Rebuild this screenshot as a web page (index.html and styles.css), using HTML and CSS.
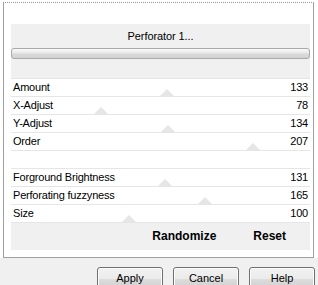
FILE: index.html
```html
<!DOCTYPE html>
<html lang="en">
<head>
  <meta charset="UTF-8">
  <title>Perforator 1...</title>
  <link rel="stylesheet" href="styles.css">
</head>
<body>
  <div class="dialog">
    <div class="frame">
      <div class="panel">
        <div class="title">Perforator 1...</div>
        <div class="progress"></div>
        <div class="sliders">
          <div class="row"><span>Amount</span><span>133</span><i class="thumb" style="left:156px"></i></div>
          <div class="row"><span>X-Adjust</span><span>78</span><i class="thumb" style="left:90px"></i></div>
          <div class="row"><span>Y-Adjust</span><span>134</span><i class="thumb" style="left:157px"></i></div>
          <div class="row"><span>Order</span><span>207</span><i class="thumb" style="left:242px"></i></div>
          <div class="row"></div>
          <div class="row"><span>Forground Brightness</span><span>131</span><i class="thumb" style="left:154px"></i></div>
          <div class="row"><span>Perforating fuzzyness</span><span>165</span><i class="thumb" style="left:194px"></i></div>
          <div class="row"><span>Size</span><span>100</span><i class="thumb" style="left:118px"></i></div>
        </div>
        <div class="actions">
          <span>Randomize</span>
          <span>Reset</span>
        </div>
      </div>
    </div>
    <div class="footer">
      <button>Apply</button>
      <button>Cancel</button>
      <button>Help</button>
    </div>
  </div>
</body>
</html>
```

FILE: styles.css
```css
*{
  margin: 0;
  padding: 0;
  box-sizing: border-box;
}
html, body{
  width: 318px;
  height: 285px;
  overflow: hidden;
}
body{
  background: #fff;
  color: #000;
  font-family: "Liberation Sans", Arial, sans-serif;
  font-size: 11px;
}
.dialog{
  height: 100%;
  display: flex;
  flex-direction: column;
}
.frame{
  margin: 2px 0 0 3px;
  width: 311px;
  background: #fff;
  border: 1px solid #a0a0a0;
  border-top: 1px dotted #9a9a9a;
  padding: 21px 3px 7px 7px;
}
.panel{
  width: 299px;
  background: #f0f0f0;
}
.title{
  height: 24px;
  line-height: 24px;
  text-align: center;
  letter-spacing: -0.1px;
}
.progress{
  height: 11px;
  border: 1px solid #a9a9a9;
  border-radius: 3px;
  background: linear-gradient(#fafafa, #e8e8e8 45%, #dadada 55%, #d2d2d2);
  margin-bottom: 19px;
}
.sliders{
  background: #fff;
  border-bottom: 1px solid #e6e6e6;
}
.row{
  position: relative;
  height: 18px;
  border-top: 1px solid #e6e6e6;
  line-height: 17px;
  padding: 0 2px;
  display: flex;
  justify-content: space-between;
  letter-spacing: -0.2px;
}
.row span{
  position: relative;
  z-index: 1;
}
.thumb{
  position: absolute;
  bottom: 0;
  width: 0;
  height: 0;
  margin-left: -7px;
  border-left: 7px solid transparent;
  border-right: 7px solid transparent;
  border-bottom: 7px solid #e6e6e6;
}
.actions{
  height: 27px;
  line-height: 27px;
  display: flex;
  justify-content: flex-end;
  gap: 37px;
  padding-right: 24px;
  font-size: 12px;
  font-weight: bold;
}
.footer{
  flex: 1;
  background: #f0f0f0;
  display: flex;
  justify-content: flex-end;
  gap: 10px;
  padding: 9px 3px 0 0;
}
.footer button{
  width: 66px;
  height: 23px;
  border: 1px solid #707070;
  border-radius: 3px;
  background: linear-gradient(#f2f2f2, #ebebeb 50%, #dddddd 51%, #cfcfcf);
  box-shadow: inset 0 0 0 1px #fcfcfc;
  font-family: "Liberation Sans", Arial, sans-serif;
  font-size: 11px;
  line-height: 21px;
  color: #000;
}
```
